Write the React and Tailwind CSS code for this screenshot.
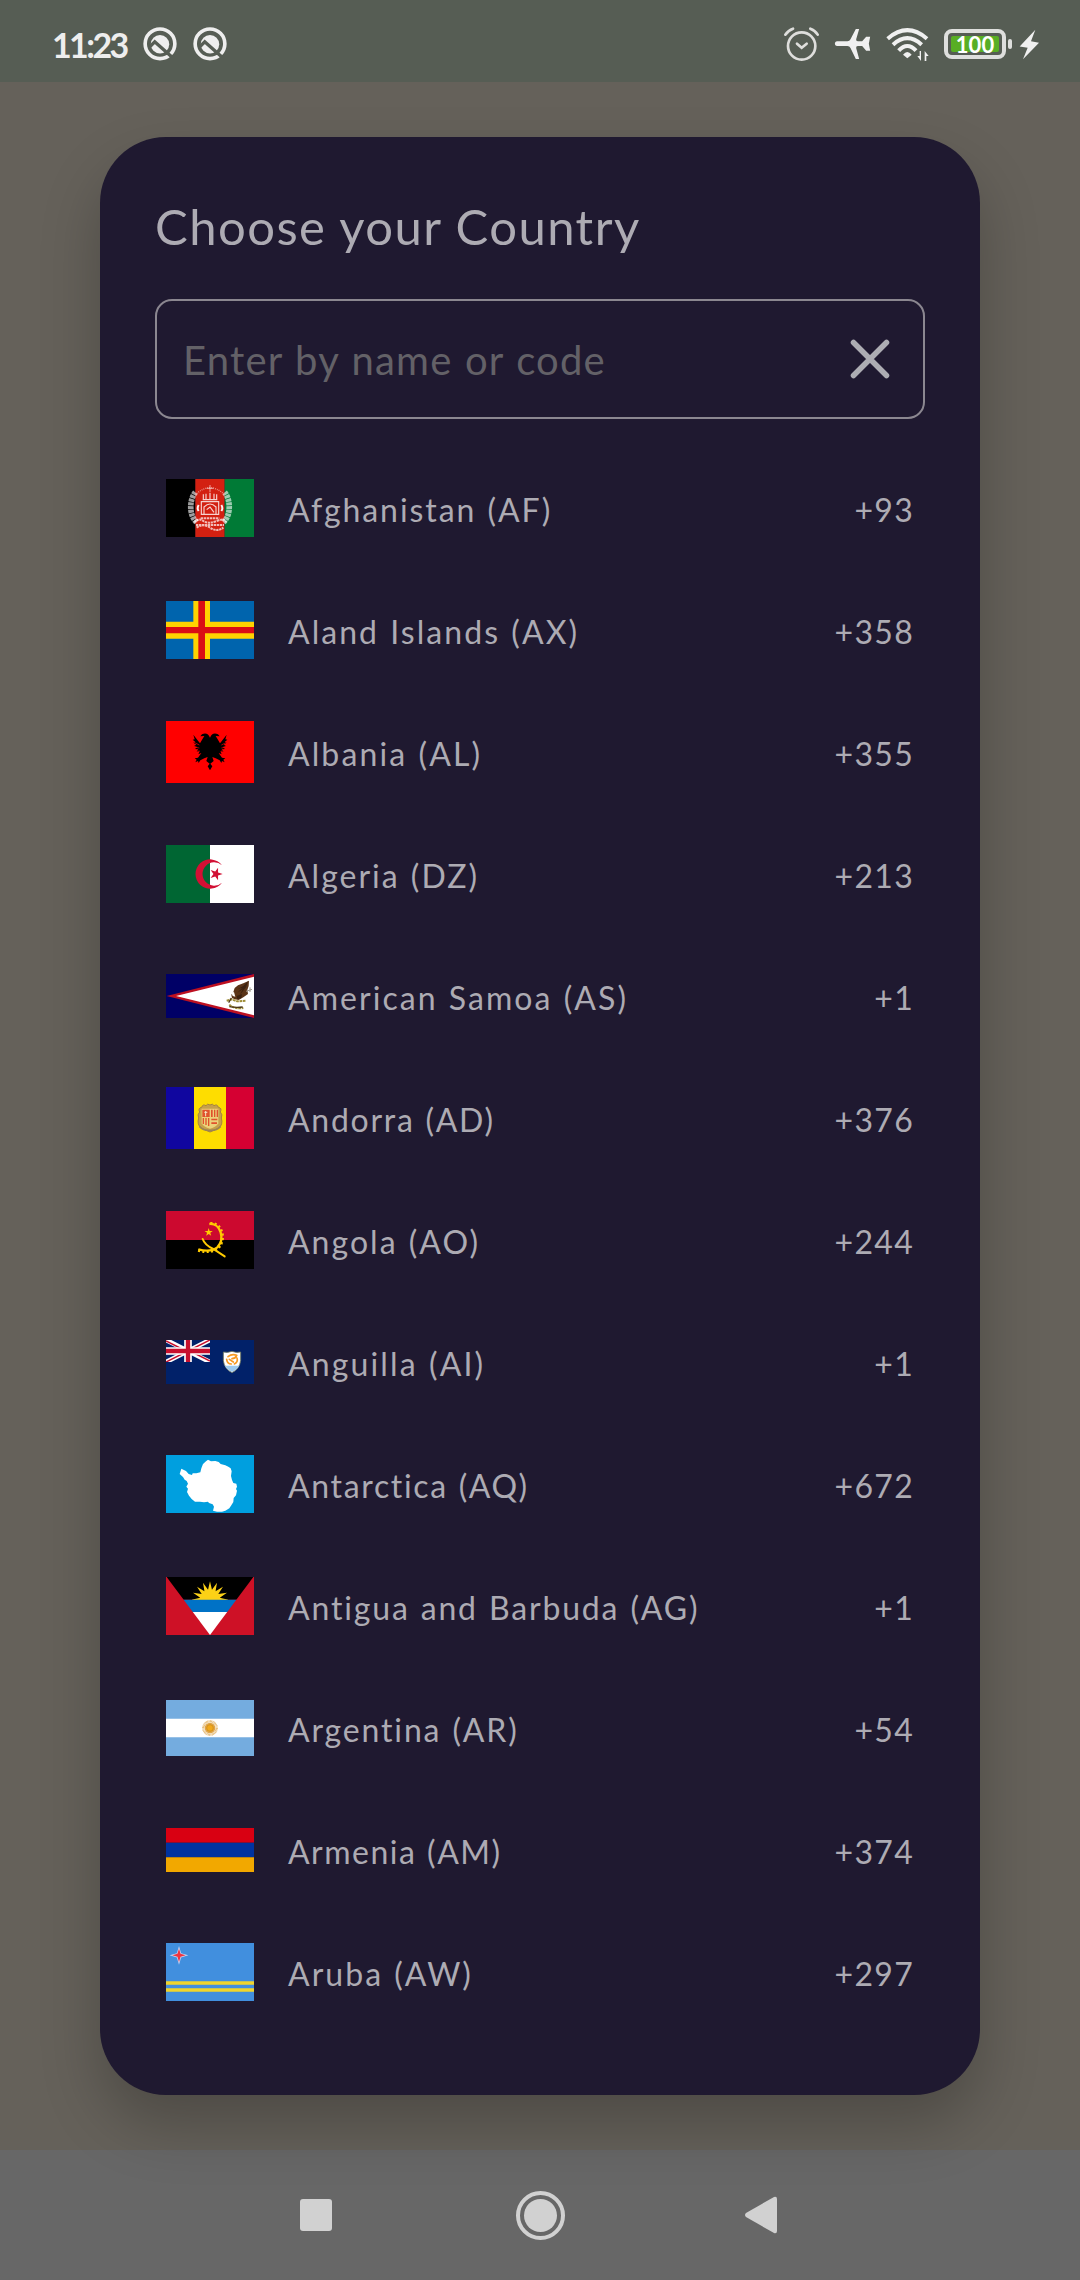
function Flag({ h, children }) {
  return (
    <svg viewBox={`0 0 264 ${h * 3}`} width="88" height={h} className="block shrink-0">
      {children}
    </svg>
  );
}

function star(cx, cy, r, ri, n, rot) {
  const pts = [];
  for (let i = 0; i < n * 2; i++) {
    const a = rot + (i * Math.PI) / n;
    const q = i % 2 ? ri : r;
    pts.push(`${(cx + q * Math.cos(a)).toFixed(1)},${(cy + q * Math.sin(a)).toFixed(1)}`);
  }
  return pts.join(" ");
}

const flags = {
  AF: (
    <Flag h={58}>
      <path fill="#000" d="M0 0h88v174H0z" />
      <path fill="#d32011" d="M88 0h88v174H88z" />
      <path fill="#007a36" d="M176 0h88v174h-88z" />
      <g fill="none" stroke="#fff">
        <path d="M88 40C70 62 68 108 92 130M176 40c18 22 20 68-4 90" strokeWidth="17" strokeDasharray="9 2" opacity=".62" />
        <path d="M92 44Q132 8 172 44" strokeWidth="4" strokeDasharray="3 3" opacity=".5" />
        <path d="M132 18v22M122 28h20" strokeWidth="2.5" opacity=".7" />
        <path d="M106 68h52v38h-52zM114 106V84q18-18 36 0v22M112 60V46M120 62V44M144 62V44M152 60V46M110 62h44M122 92l10-8 12 16M132 42v18" strokeWidth="3.5" opacity=".8" />
        <path d="M98 78q-6 10 0 18M166 78q6 10 0 18" strokeWidth="6" opacity=".95" />
        <path d="M84 130q14-14 28-4t40 0 28 4M92 146q20-14 40 0t40 0M90 138h84M104 118h56" strokeWidth="6" strokeDasharray="7 2" opacity=".7" />
      </g>
    </Flag>
  ),
  AX: (
    <Flag h={58}>
      <path fill="#0064ad" d="M0 0h264v174H0z" />
      <path fill="#ffd300" d="M82 0h50v174H82zM0 62h264v51H0z" />
      <path fill="#da0e15" d="M97 0h20v174H97zM0 78h264v19H0z" />
    </Flag>
  ),
  AL: (
    <Flag h={62}>
      <path fill="#f00" d="M0 0h264v186H0z" />
      <path
        d="M132 50C128 38 118 34 108 40l-5 6 12-1-6 10-7 12-6-8-14-18 4 14-6 1 8 7-6 2 9 6-7 4 10 3-7 6 10 1-6 8 10-2-4 9 9-4-10 14-10 2 6 4-4 8 8-4 2 6 5-8 12-6 10-4-4 12 10 8-6 8 7 12 7-12-6-8 10-8-4-12 10 4 12 6 5 8 2-6 8 4-4-8 6-4-10-2-10-14 9 4-4-9 10 2-6-8 10-1-7-6 10-3-7-4 9-6-6-2 8-7-6-1 4-14-14 18-6 8-7-12-6-10 12 1-5-6c-10-6-20-2-24 10z"
      />
      <g stroke="#f00" strokeWidth="2" fill="none">
        <path d="M84 64l16 8M84 78l16 3M86 92l15-2M182 64l-16 8M182 78l-16 3M180 92l-15-2" />
      </g>
    </Flag>
  ),
  DZ: (
    <Flag h={58}>
      <path fill="#063" d="M0 0h132v174H0z" />
      <path fill="#fff" d="M132 0h132v174H132z" />
      <path fill="#d21034" d="M168 61A44 44 0 1 0 168 113 35 35 0 1 1 168 61z" />
      <polygon fill="#d21034" points={star(150, 87, 20, 7.6, 5, 0)} />
    </Flag>
  ),
  AS: (
    <Flag h={44}>
      <path fill="#006" d="M0 0h264v132H0z" />
      <path fill="#bd1021" d="M2 66L264 0v132z" />
      <path fill="#fff" d="M30 66L264 8v116z" />
      <path fill="#5a3417" d="M249 20l-1 16-4 12 2 12-14 10-14 8-12-2-8-4-2-10 6-8 4-12 10-8 16-6z" />
      <path fill="#3b210f" d="M246 22l-14 14-16 8 12-2-14 14 16-10-8 16 18-22zM212 66l16-6-2 12-12 4z" />
      <path fill="#fff" d="M196 56l8-2 4 14-8-2z" />
      <path fill="none" stroke="#a09a8e" strokeWidth="3" d="M240 52l18-6M252 40v14" />
      <path fill="none" stroke="#9f8d38" strokeWidth="6" d="M182 80l14-4 18 6 26-2M190 92q14 14 42 10" strokeDasharray="8 2" />
      <path fill="none" stroke="#4b3616" strokeWidth="4" d="M196 72l-8 14M190 98q20 4 40 1" />
    </Flag>
  ),
  AD: (
    <Flag h={62}>
      <path fill="#10069f" d="M0 0h84v186H0z" />
      <path fill="#fedd00" d="M84 0h96v186H84z" />
      <path fill="#d50032" d="M180 0h84v186h-84z" />
      <path fill="#c7a04a" stroke="#a5823f" strokeWidth="3" d="M132 54q8-6 12 2 10-6 13 5 12 2 6 14 8 8 3 18 6 20-8 30-12 6-26 12-14-6-26-12-14-10-8-30-5-10 3-18-6-12 6-14 3-11 13-5 4-8 12-2z" />
      <path fill="#ecd27a" d="M107 65h50v44q-6 12-25 16-19-4-25-16z" />
      <path fill="#e0522c" d="M109 68h22v22h-22zM135 68h5v22h-5zM144 68h4v22h-4zM152 68h4v22h-4zM110 93h4v18h-4zM118 93h4v21h-4zM126 93h4v24h-4zM136 95h18v5h-18zM136 106h17v5h-17z" />
      <path stroke="#f8e8c8" strokeWidth="3" fill="none" d="M119 72v16M115 76h9" />
      <path stroke="#9c8354" strokeWidth="5" fill="none" d="M100 118q14 14 32 12 18 2 32-12" />
    </Flag>
  ),
  AO: (
    <Flag h={58}>
      <path fill="#cc092f" d="M0 0h264v87H0z" />
      <path fill="#000" d="M0 87h264v87H0z" />
      <g fill="none" stroke="#ffcb00">
        <path d="M130 39C164 36 178 84 154 109Q134 125 97 115" strokeWidth="7" />
        <path d="M133 37C170 34 182 88 156 112Q134 129 96 118" strokeWidth="8" strokeDasharray="6 7" />
        <path d="M110 84q6 18 32 30l34 22" strokeWidth="6" strokeLinecap="round" />
      </g>
      <polygon fill="#ffcb00" points={star(128, 64, 13, 5, 5, -Math.PI / 2)} />
    </Flag>
  ),
  AI: (
    <Flag h={44}>
      <path fill="#012169" d="M0 0h264v132H0z" />
      <svg width="132" height="66" viewBox="0 0 132 66">
        <path stroke="#fff" strokeWidth="14" d="M0 0l132 66M132 0L0 66" />
        <path stroke="#c8102e" strokeWidth="4.5" d="M0 3l66 33M132 63L66 30M132 0L66 33M0 66l66-33" />
        <path stroke="#fff" strokeWidth="23" d="M66 0v66M0 33h132" />
        <path stroke="#c8102e" strokeWidth="13" d="M66 0v66M0 33h132" />
      </svg>
      <path fill="#fff" stroke="#66705a" strokeWidth="2.5" d="M172 36q14 3 26-2 12 5 26 2v26q-3 24-26 36-23-12-26-36z" />
      <path fill="#9ccaf0" d="M176 77h44q-7 12-22 19-15-7-22-19z" />
      <path fill="none" stroke="#f79a22" strokeWidth="5" strokeLinecap="round" d="M186 50q12-10 26-4-4 10-14 10M182 58q2 14 14 14M213 54q4 12-8 18M190 58l12 8" />
    </Flag>
  ),
  AQ: (
    <Flag h={58}>
      <path fill="#009fdf" d="M0 0h264v174H0z" />
      <path
        fill="#fff"
        d="M46 41l14 7 8 9 10 3 2-5 11 0 12-3 3-12 5-13 9-8 6-5 9 5 13-1 10 3 6 6 14 4 9 4 7 5 3 9-2 14 3 12 4 9 9 2 2 9-3 7 3 5-3 14-7 8-1 12-6 10-6 9-12 7-10 3-15 0-12-3 3-12-4-7-11-4-3-4-12 2-12-2-15 0-10-8-8-10-6-11 3-10-5-6 5-9-4-8-6-4-5-8-10-9z"
      />
    </Flag>
  ),
  AG: (
    <Flag h={58}>
      <path fill="#ce1126" d="M0 0h264v174H0z" />
      <clipPath id="ag-v">
        <path d="M2 0h260L132 174z" />
      </clipPath>
      <g clipPath="url(#ag-v)">
        <path fill="#000" d="M0 0h264v68H0z" />
        <polygon fill="#fcd116" points={star(132, 68, 55, 30, 16, -Math.PI / 2)} />
        <path fill="#0072c6" d="M0 68h264v37H0z" />
        <path fill="#fff" d="M0 105h264v69H0z" />
      </g>
    </Flag>
  ),
  AR: (
    <Flag h={56}>
      <path fill="#74acdf" d="M0 0h264v168H0z" />
      <path fill="#fff" d="M0 56h264v56H0z" />
      <circle cx="132" cy="84" r="20" fill="none" stroke="#e2b56c" strokeWidth="7" strokeDasharray="2.5 1.4" />
      <circle cx="132" cy="84" r="16" fill="#dfa548" />
      <circle cx="132" cy="84" r="10" fill="#f0a81c" stroke="#c98712" strokeWidth="2" />
    </Flag>
  ),
  AM: (
    <Flag h={44}>
      <path fill="#d90012" d="M0 0h264v44H0z" />
      <path fill="#0033a0" d="M0 44h264v44H0z" />
      <path fill="#f2a800" d="M0 88h264v44H0z" />
    </Flag>
  ),
  AW: (
    <Flag h={58}>
      <path fill="#418fde" d="M0 0h264v174H0z" />
      <path fill="#f0d52c" d="M0 115h264v10H0zM0 136h264v10H0z" />
      <polygon fill="#c9d3f0" points={star(39, 37, 28, 9, 4, 0)} />
      <polygon fill="#ef3340" points={star(39, 37, 20, 6.5, 4, 0)} />
    </Flag>
  ),
};

const countries = [
  ["AF", "Afghanistan (AF)", "+93", "tracking-[1.94px]"],
  ["AX", "Aland Islands (AX)", "+358", "tracking-[2.05px]"],
  ["AL", "Albania (AL)", "+355", "tracking-[2.11px]"],
  ["DZ", "Algeria (DZ)", "+213", "tracking-[2px]"],
  ["AS", "American Samoa (AS)", "+1", "tracking-[2.05px]"],
  ["AD", "Andorra (AD)", "+376", "tracking-[1.72px]"],
  ["AO", "Angola (AO)", "+244", "tracking-[2.02px]"],
  ["AI", "Anguilla (AI)", "+1", "tracking-[2.13px]"],
  ["AQ", "Antarctica (AQ)", "+672", "tracking-[1.66px]"],
  ["AG", "Antigua and Barbuda (AG)", "+1", "tracking-[1.84px]"],
  ["AR", "Argentina (AR)", "+54", "tracking-[1.85px]"],
  ["AM", "Armenia (AM)", "+374", "tracking-[1.5px]"],
  ["AW", "Aruba (AW)", "+297", "tracking-[2.03px]"],
];

function QIcon() {
  return (
    <svg viewBox="429 80 102 103" width="34" height="34">
      <circle cx="480" cy="131" r="45" fill="none" stroke="#eee" strokeWidth="11" />
      <circle cx="480" cy="132" r="28" fill="#eee" />
      <path d="M446 143l18-18 52 46" fill="none" stroke="#565d54" strokeWidth="10" />
    </svg>
  );
}

function StatusBar() {
  return (
    <header className="flex h-[82px] shrink-0 items-center justify-between bg-[#565d54] pt-[6px] pr-[41px] pl-[52px]">
      <div className="flex items-center">
        <span className="w-[91px] pt-[2px] text-[34px] leading-none font-bold tracking-[-2.6px] text-[#eee]">11:23</span>
        <QIcon />
        <span className="w-4" />
        <QIcon />
      </div>
      <div className="flex items-center">
        <svg viewBox="190 78 108 108" width="36" height="36" fill="none" stroke="#dededc" strokeLinecap="round">
          <circle cx="246" cy="138" r="41" strokeWidth="8" />
          <path d="M232 131l14 12 15-12" strokeWidth="8" />
          <path d="M197 104q9-13 23-18M272 86q14 5 22 18" strokeWidth="8" />
        </svg>
        <svg viewBox="343 84 110 96" width="37" height="32" fill="#f0f0f0" className="ml-[15px]">
          <path d="M351 124h32q6 0 9-6l16-31h10l-9 31q-1 6 5 6h13l12-14h12l-4 21 4 21h-12l-12-14h-13q-6 0-5 6l9 33h-10l-16-33q-3-6-9-6h-32q-6-1-6-7t6-7z" />
        </svg>
        <svg viewBox="497 84 129 105" width="43" height="35" fill="none" stroke="#f0f0f0" className="ml-[15px]">
          <path d="M502 119Q561 68 620 119" strokeWidth="12" />
          <path d="M518 137Q561 98 604 137" strokeWidth="12" />
          <path d="M535 155Q561 127 587 155" strokeWidth="12" />
          <path d="M548 167q13-16 26 0l-13 11z" fill="#f0f0f0" stroke="none" />
          <path d="M602 156v30l-11-15h7v-15zM613 186v-30l12 15h-7v15z" fill="#f0f0f0" stroke="none" />
        </svg>
        <div className="ml-[15px] flex h-[30px] w-[62px] items-center rounded-[8px] border-[4px] border-[#dedfdd] p-[3px]">
          <div className="flex h-4 w-full items-center justify-center rounded-[2px] bg-[#58ae24] pt-px text-[22px] leading-none font-bold text-white">
            100
          </div>
        </div>
        <div className="ml-[2px] h-[10px] w-[4px] rounded-[2px] bg-[#dedfdd]" />
        <svg viewBox="898 86 60 92" width="20" height="31" fill="#f0f0f0" className="ml-[7px]">
          <path d="M947 88l-47 50 24 4-14 34 48-49-24-5z" />
        </svg>
      </div>
    </header>
  );
}

export default function App() {
  return (
    <div className="flex h-[2280px] w-[1080px] flex-col bg-[#65615a] font-['Lato',sans-serif]">
      <StatusBar />
      <main className="relative z-10 mx-[100px] mt-[55px] h-[1958px] shrink-0 rounded-[66px] bg-[#1f1930] px-[55px] text-[#adabb3] shadow-[0_30px_60px_rgba(0,0,0,0.23)]">
        <h1 className="pt-[59px] text-[49px] leading-[60px] tracking-[1.45px] whitespace-nowrap">
          Choose your Country
        </h1>
        <div className="mt-[43px] flex h-[120px] items-center justify-between rounded-[17px] border-2 border-[#8b8790] pr-[32px] pl-[26px]">
          <span className="pt-px text-[40px] tracking-[1.2px] text-[#636167] [word-spacing:1px]">Enter by name or code</span>
          <svg width="42" height="42" viewBox="0 0 42 42" stroke="#adadb3" strokeWidth="5.5" strokeLinecap="round">
            <path d="M4.5 4.500l33 33M37.500 4.500l-33 33" />
          </svg>
        </div>
        <ul className="mt-[28px] pr-[11px] pl-[11px] text-[32px]">
          {countries.map(([id, name, code, tracking]) => (
            <li key={id} className="flex h-[122px] items-center">
              {flags[id]}
              <span className={`ml-[34px] pt-[3px] [word-spacing:1px] ${tracking}`}>{name}</span>
              <span className="ml-auto pt-[3px] tracking-[1.3px]">{code}</span>
            </li>
          ))}
        </ul>
      </main>
      <nav className="mt-[55px] flex h-[130px] shrink-0 items-center bg-[#676767] pl-[300px]">
        <span className="size-8 rounded-[3px] bg-[#d1d1d1]" />
        <span className="ml-[184px] flex size-[49px] items-center justify-center rounded-full border-4 border-[#d1d1d1]">
          <span className="size-[33px] rounded-full bg-[#d1d1d1]" />
        </span>
        <svg width="32" height="38" viewBox="0 0 32 38" fill="#d1d1d1" className="ml-[180px]">
          <path d="M29 1q3-1 3 2v32q0 3-3 2L1 21q-2-2 0-4z" />
        </svg>
      </nav>
    </div>
  );
}
